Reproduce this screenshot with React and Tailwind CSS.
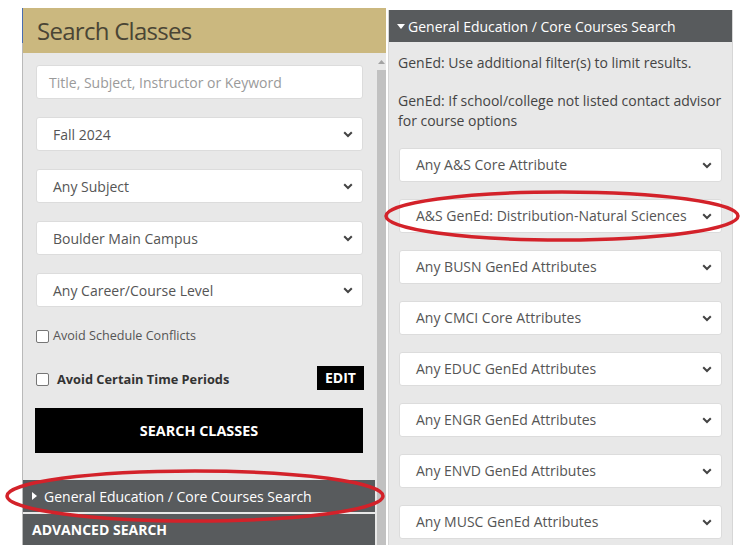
import React from "react";

const font = { fontFamily: '"Open Sans", "Noto Sans", Arial, sans-serif' };

const Chevron = () => (
  <svg width="10" height="7" viewBox="0 0 10 7" className="shrink-0">
    <path d="M1.2 1.2 L5 5 L8.8 1.2" fill="none" stroke="#444" strokeWidth="2" />
  </svg>
);

const Select = ({ label }) => (
  <div className="flex h-[34px] items-center justify-between rounded-[3px] border border-[#dcdcdc] bg-white pl-[16px] pr-[9px] text-[14px] text-[#555]">
    <span>{label}</span>
    <Chevron />
  </div>
);

const Checkbox = () => (
  <span className="inline-block h-[13px] w-[13px] shrink-0 rounded-[2px] border border-[#767676] bg-white" />
);

const gened = [
  "Any A&S Core Attribute",
  "A&S GenEd: Distribution-Natural Sciences",
  "Any BUSN GenEd Attributes",
  "Any CMCI Core Attributes",
  "Any EDUC GenEd Attributes",
  "Any ENGR GenEd Attributes",
  "Any ENVD GenEd Attributes",
  "Any MUSC GenEd Attributes",
];

export default function App() {
  return (
    <div className="relative flex h-[558px] w-[750px] overflow-hidden bg-white" style={font}>
      {/* left screenshot: search panel */}
      <div className="ml-[22px] mt-[8px] flex h-[537px]">
        {/* edge of the page behind the panel */}
        <div className="flex w-px flex-col">
          <div className="h-[35px] bg-[#4a6db0]" />
          <div className="flex-1 bg-[#b9b9b9]" />
        </div>
        <div className="flex w-[363px] flex-col">
          <div className="flex h-[45px] items-center bg-[#cbb87f] pl-[14px] text-[24px] tracking-[-0.03em] text-[#4a4535]">
            Search Classes
          </div>
          <div className="flex flex-1 bg-[#e8e8e8]">
            <div className="flex w-[352px] flex-col">
              <div className="flex flex-col gap-[18px] pl-[13px] pr-[12px] pt-[12px]">
                <div className="flex h-[34px] items-center rounded-[3px] border border-[#dcdcdc] bg-white pl-[12px] text-[14px] text-[#9a9a9a]">
                  Title, Subject, Instructor or Keyword
                </div>
                <Select label="Fall 2024" />
                <Select label="Any Subject" />
                <Select label="Boulder Main Campus" />
                <Select label="Any Career/Course Level" />
              </div>
              <label className="mt-[20px] flex items-center gap-[4px] pl-[13px] text-[12.6px] text-[#555]">
                <Checkbox />
                Avoid Schedule Conflicts
              </label>
              <div className="mt-[20px] flex items-center justify-between pl-[13px] pr-[11px]">
                <label className="flex items-center gap-[8px] pt-[3px] text-[12.8px] font-bold text-[#333]">
                  <Checkbox />
                  Avoid Certain Time Periods
                </label>
                <div className="flex h-[24px] w-[47px] items-center justify-center bg-black text-[14px] font-bold text-white">
                  EDIT
                </div>
              </div>
              <div className="mx-[12px] mt-[18px] flex h-[45px] items-center justify-center bg-black text-[14.4px] font-bold text-white">
                SEARCH CLASSES
              </div>
              <div className="mt-auto flex h-[32px] items-center gap-[7px] bg-[#585b5d] pl-[9px] text-[14px] text-white">
                <svg width="5" height="8" viewBox="0 0 5 8">
                  <path d="M0 0 L5 4 L0 8 Z" fill="#fff" />
                </svg>
                General Education / Core Courses Search
              </div>
              <div className="mt-[2px] flex h-[31px] items-center bg-[#585b5d] pl-[9px] text-[14px] font-bold text-white">
                ADVANCED SEARCH
              </div>
            </div>
            <div className="flex w-[11px] flex-col pl-[2px]">
              <div className="flex h-[17px] items-center justify-center">
                <svg width="7" height="4" viewBox="0 0 7 4">
                  <path d="M0 4 L3.5 0 L7 4 Z" fill="#a3a3a3" />
                </svg>
              </div>
              <div className="flex-1 bg-[#c1c1c1]" />
            </div>
          </div>
        </div>
      </div>

      {/* right screenshot: gen ed panel */}
      <div className="ml-[2px] mt-[10px] flex h-[535px] w-[345px] flex-col border-x border-[#d6d6d6] bg-[#e8e8e8]">
        <div className="flex h-[32px] items-center gap-[3px] bg-[#585b5d] pl-[8px] text-[14px] text-white">
          <svg width="8" height="5" viewBox="0 0 8 5">
            <path d="M0 0 L8 0 L4 5 Z" fill="#fff" />
          </svg>
          General Education / Core Courses Search
        </div>
        <div className="flex flex-col pl-[9px] pr-[10px] text-[14px] leading-[20px] text-[#444]">
          <p className="mt-[11px]">GenEd: Use additional filter(s) to limit results.</p>
          <p className="mt-[18px]">
            GenEd: If school/college not listed contact advisor for course options
          </p>
          <div className="mt-[17px] flex flex-col gap-[17px] pl-[1px]">
            {gened.map((g) => (
              <Select key={g} label={g} />
            ))}
          </div>
        </div>
      </div>

      {/* red annotation ellipses */}
      <svg className="pointer-events-none absolute left-0 top-0" width="750" height="558">
        <ellipse cx="195" cy="496" rx="188" ry="25" fill="none" stroke="#d3222a" strokeWidth="3.5" />
        <ellipse cx="562" cy="216" rx="176" ry="24" fill="none" stroke="#d3222a" strokeWidth="3.5" />
      </svg>
    </div>
  );
}
